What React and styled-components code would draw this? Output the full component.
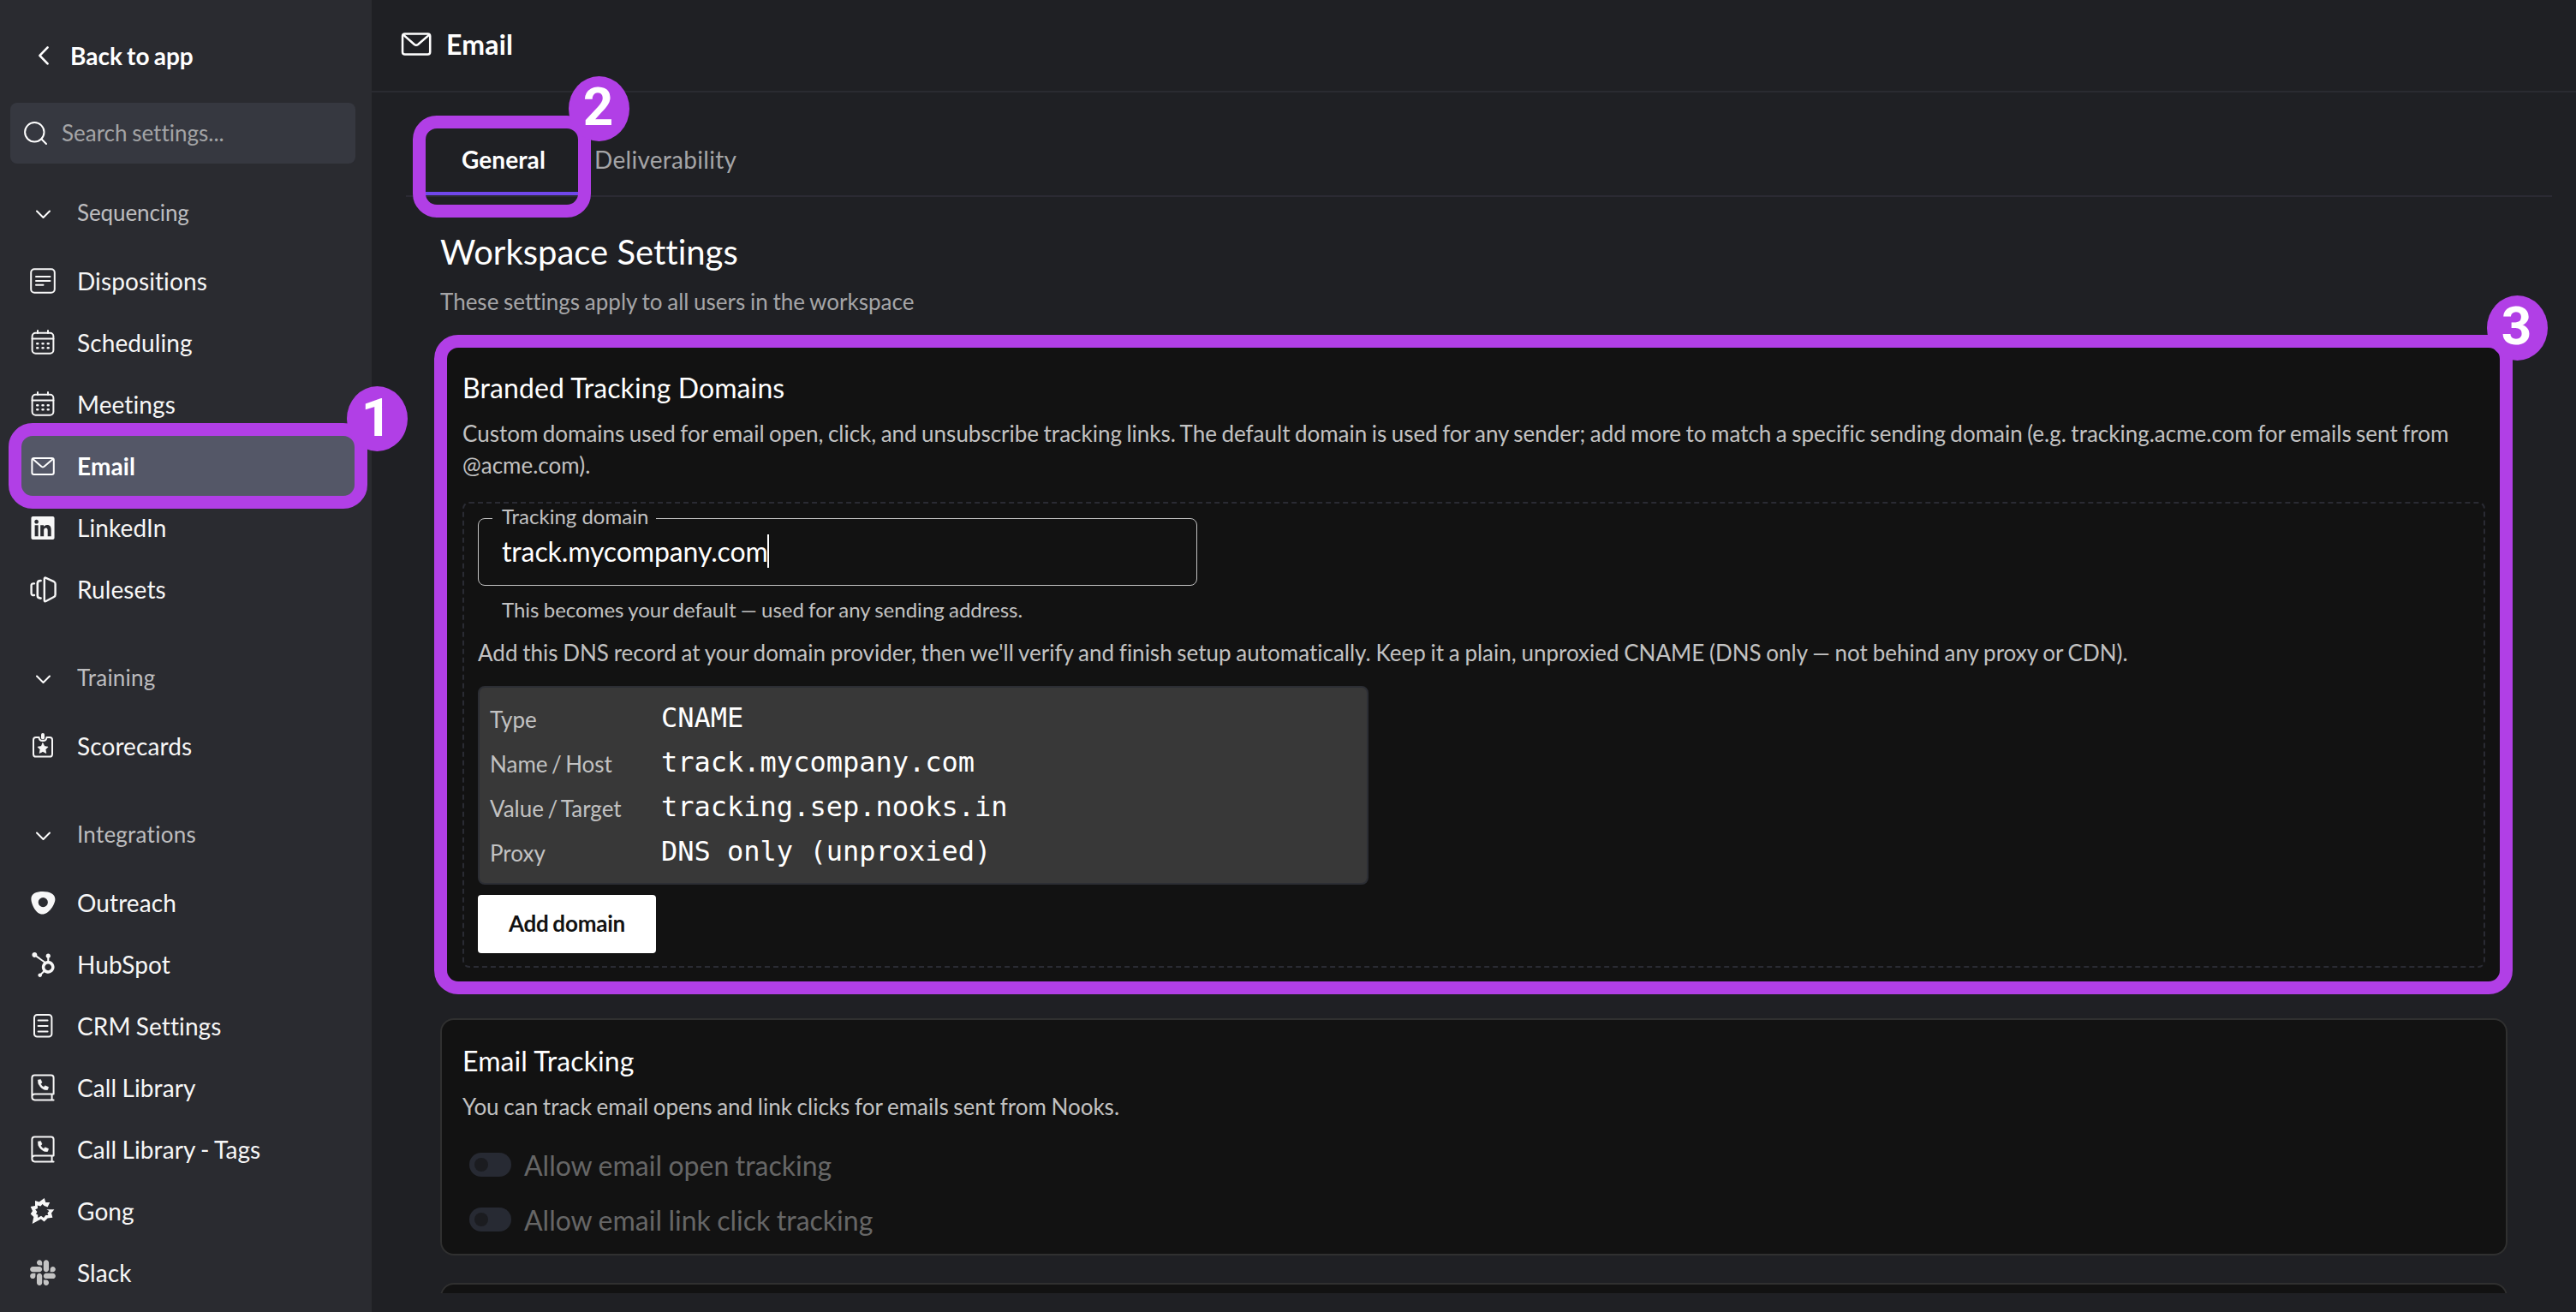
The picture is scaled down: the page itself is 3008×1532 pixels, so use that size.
import React from "react";
import styled, { createGlobalStyle, css } from "styled-components";
import { FaHubspot, FaLinkedin, FaSlack } from "react-icons/fa";

const GlobalStyle = createGlobalStyle`
    * {
        box-sizing: border-box;
    }

    body {
        margin: 0;
        background-color: #1f2024;
        color: #ffffff;
        font-family: Lato, "Liberation Sans", sans-serif;
        font-size: 28px;
        font-variant-ligatures: none;
        overflow: hidden;
    }
`;

/* Layout */

const Page = styled.div`
    display: flex;
    height: 1532px;
    overflow: hidden;
`;

const Sidebar = styled.nav`
    flex: none;
    width: 434px;
    display: flex;
    flex-direction: column;
    background-color: #2a2b30;
`;

const Main = styled.main`
    flex-grow: 1;
    min-width: 0;
    display: flex;
    flex-direction: column;
    padding-bottom: 22px;
`;

/* Callouts */

const CalloutFrame = styled.div`
    position: absolute;
    top: ${props => props.$top}px;
    right: ${props => props.$right}px;
    bottom: ${props => props.$bottom}px;
    left: ${props => props.$left}px;
    border: 15.5px solid #b13fe6;
    border-radius: 28px;
    z-index: 2;
    pointer-events: none;
`;

const CalloutBadge = styled.div`
    position: absolute;
    top: ${props => props.$top}px;
    right: ${props => props.$right}px;
    width: 71px;
    height: 76px;
    display: flex;
    align-items: center;
    justify-content: center;
    padding: 0 2px 3px 0;
    border-radius: 50%;
    background-color: #b13fe6;
    color: #ffffff;
    font-family: Roboto, "Liberation Sans", sans-serif;
    font-size: 62px;
    font-weight: 700;
    line-height: 1;
`;

const Callout = ({ number, top, right, bottom, left, badgeTop, badgeRight }) => (
    <CalloutFrame $top={top} $right={right} $bottom={bottom} $left={left}>
        <CalloutBadge $top={badgeTop} $right={badgeRight}>{number}</CalloutBadge>
    </CalloutFrame>
);

/* Icons */

const Svg = styled.svg`
    display: block;
    flex: none;
    fill: none;
    stroke: currentColor;
    stroke-width: 2;
    stroke-linecap: round;
    stroke-linejoin: round;
    overflow: visible;
`;

const ChevronLeftIcon = () => (
    <Svg width="12" height="22" viewBox="0 0 12 22">
        <path d="M10.6 1.4 1.4 10.8 10.6 20.4" strokeWidth="2.6" />
    </Svg>
);

const ChevronDownIcon = () => (
    <Svg width="30" height="30" viewBox="0 0 30 30">
        <path d="M8 13.5 15.5 21 23 13.5" />
    </Svg>
);

const SearchIcon = () => (
    <Svg width="28" height="28" viewBox="0 0 28 28">
        <circle cx="12.3" cy="12.3" r="11.2" />
        <path d="M20.3 20.3 26 26" />
    </Svg>
);

const MailIcon = ({ size = 30 }) => (
    <Svg width={size} height={size} viewBox="0 0 30 30">
        <rect x="2.4" y="5.9" width="25.4" height="19" rx="2.2" />
        <path d="M3.4 7 13.4 15.8Q15 17 16.6 15.8L26.8 7" />
    </Svg>
);

const DispositionsIcon = () => (
    <Svg width="30" height="30" viewBox="0 0 30 30">
        <rect x="1.2" y="1.2" width="27.6" height="27.6" rx="4" />
        <path d="M7 10H23.5M7 15H23.5M7 19.8H15.5" />
    </Svg>
);

const CalendarIcon = () => (
    <Svg width="30" height="30" viewBox="0 0 30 30">
        <rect x="2.6" y="3.8" width="24.8" height="24" rx="4" />
        <path d="M2.6 10.4H27.4M9 1V4M21 1V4" />
        <path d="M8.3 16.3H9.2M14.6 16.3H15.5M20.8 16.3H21.7M8.3 21.2H9.2M14.6 21.2H15.5M20.8 21.2H21.7" strokeWidth="2.6" />
    </Svg>
);

const RulesetsIcon = () => (
    <Svg width="30" height="30" viewBox="0 0 30 30">
        <path d="M16.8 3Q16.8 1 18.6 1.8L28 6.2Q29.6 7 29.6 8.8V21.6Q29.6 23.2 28 24L18.6 29Q16.8 29.8 16.8 28Z" strokeWidth="2.4" />
        <path d="M12.6 5Q8.8 5 8.8 8V22.6Q8.8 25.6 12.6 25.6" strokeWidth="2.6" />
        <path d="M5 8.4Q1.6 8 1.6 10.6V20Q1.6 22.4 5 22" strokeWidth="2.4" />
    </Svg>
);

const ScorecardIcon = () => (
    <Svg width="30" height="30" viewBox="0 0 30 30">
        <path d="M10.6 5H7Q4 5 4 8V24.4Q4 27.6 7 27.6H23Q26 27.6 26 24.4V8Q26 5 23 5H19.4Q19.4 9 15 9Q10.6 9 10.6 5Z" />
        <path d="M15 2V5.6" strokeWidth="4" />
        <path d="M15 11.8 16.9 15.6 21 16.2 18 19.2 18.8 23.4 15 21.4 11.2 23.4 12 19.2 9 16.2 13.1 15.6Z" fill="currentColor" strokeWidth="0.8" />
    </Svg>
);

const OutreachIcon = () => (
    <Svg width="30" height="30" viewBox="0 0 30 30">
        <path
            d="M15 2C8 2 1.4 4 1.4 10.5C1.4 17 7 28.6 14.5 28.6C22 28.6 29.4 17 29.4 11C29.4 5 23 2 15 2ZM15.3 9A5.6 5.6 0 1 1 15.3 20.2A5.6 5.6 0 1 1 15.3 9Z"
            fill="currentColor"
            fillRule="evenodd"
            stroke="none"
        />
    </Svg>
);

const CrmIcon = () => (
    <Svg width="30" height="30" viewBox="0 0 30 30">
        <rect x="5" y="2" width="20.4" height="25.6" rx="3.4" />
        <path d="M9.6 8.6H20.6M9.6 15H20.6M9.6 21.4H20.6" />
    </Svg>
);

const CallLibraryIcon = () => (
    <Svg width="30" height="30" viewBox="0 0 30 30">
        <path d="M27.6 22.4V3.4Q27.6 .4 24.6 .4H5.4Q2.4 .4 2.4 3.4V26Q2.4 29.4 5.6 29.4H27.6M27.6 22.4H5.6Q2.4 22.4 2.4 25.6M25.6 22.4V29.4" />
        <path
            d="M9.6 6.2 12.4 5.4 14 9 12.4 10.8Q13.6 13.4 16 14.4L17.8 12.8 21.6 14.4 20.6 17.4Q16.6 18.6 12.6 14.6Q8.6 10.6 9.6 6.2Z"
            fill="currentColor"
            strokeWidth="0.6"
        />
    </Svg>
);

const GongIcon = () => (
    <Svg width="30" height="30" viewBox="0 0 30 30">
        <path
            d="M2.7 30 4.3 22 .7 18.6 3 15 .7 10 6 8.9 6 2.9 10.7 4.5 16.8 0 18.3 5 23.2 5 20.6 10.4 16.6 9 14.6 7 12.4 9.4 8.8 8.6 9 12 6.2 13.2 8.4 16 7 18.4 9.2 19.6 9.2 23 13 20.8 16 23 18.4 20 21.4 20 20.4 17.4 22.4 15 19.4 13.2 28.4 13.2 25 17.6 26.4 22.8 20.6 23.4 16.6 27.4 12.8 24.4Z"
            fill="currentColor"
            stroke="none"
        />
    </Svg>
);

/* Sidebar */

const BackLink = styled.div`
    display: flex;
    align-items: center;
    flex: none;
    gap: 25px;
    height: 120px;
    padding: 10px 0 0 45px;
    font-weight: 700;
    word-spacing: -1.6px;
`;

const SearchBox = styled.div`
    display: flex;
    align-items: center;
    flex: none;
    gap: 16px;
    height: 71px;
    margin: 0 19px 13px 12px;
    padding-left: 16px;
    border-radius: 8px;
    background-color: #363840;

    span {
        padding-bottom: 2px;
        color: #a3a4a6;
        font-size: 26px;
        word-spacing: -1px;
    }
`;

const GroupTitle = styled.div`
    display: flex;
    align-items: center;
    flex: none;
    gap: 25px;
    height: 88px;
    margin-top: ${props => props.$first ? 0 : 23}px;
    padding-left: 35px;

    span {
        color: #bdbdbf;
        font-size: 26px;
        letter-spacing: ${props => props.$first ? -0.1 : 0.24}px;
    }
`;

const NavItem = styled.div`
    position: relative;
    display: flex;
    align-items: center;
    flex: none;
    gap: 25px;
    height: 72px;
    margin: 0 18px 0 12px;
    padding-left: 23px;
    border-radius: 8px;
    color: #f7f7f7;
    letter-spacing: 0.1px;
    word-spacing: -1px;
    ${props => props.$active && css`
        background-color: #545767;
        color: #ffffff;
        font-weight: 700;
    `}
`;

const IconSlot = styled.div`
    display: flex;
    align-items: center;
    justify-content: center;
    flex: none;
    width: 30px;
    height: 30px;
    color: ${props => props.$muted ? "#c4c4c4" : "inherit"};
`;

const groups = [
    {
        title: "Sequencing",
        items: [
            { label: "Dispositions", icon: <DispositionsIcon /> },
            { label: "Scheduling", icon: <CalendarIcon /> },
            { label: "Meetings", icon: <CalendarIcon /> },
            { label: "Email", icon: <MailIcon />, active: true },
            { label: "LinkedIn", icon: <FaLinkedin size={31} /> },
            { label: "Rulesets", icon: <RulesetsIcon /> },
        ],
    },
    {
        title: "Training",
        items: [{ label: "Scorecards", icon: <ScorecardIcon /> }],
    },
    {
        title: "Integrations",
        items: [
            { label: "Outreach", icon: <OutreachIcon /> },
            { label: "HubSpot", icon: <FaHubspot size={29} /> },
            { label: "CRM Settings", icon: <CrmIcon /> },
            { label: "Call Library", icon: <CallLibraryIcon /> },
            { label: "Call Library - Tags", icon: <CallLibraryIcon /> },
            { label: "Gong", icon: <GongIcon /> },
            { label: "Slack", icon: <FaSlack size={34} />, muted: true },
        ],
    },
];

const SettingsNav = () => (
    <Sidebar>
        <BackLink>
            <ChevronLeftIcon />
            Back to app
        </BackLink>
        <SearchBox>
            <SearchIcon />
            <span>Search settings...</span>
        </SearchBox>
        {groups.map((group, i) => (
            <React.Fragment key={group.title}>
                <GroupTitle $first={i === 0}>
                    <ChevronDownIcon />
                    <span>{group.title}</span>
                </GroupTitle>
                {group.items.map(item => (
                    <NavItem key={item.label} $active={item.active}>
                        <IconSlot $muted={item.muted}>{item.icon}</IconSlot>
                        {item.label}
                        {item.active && (
                            <Callout number={1} top={-14} right={-13} bottom={-14} left={-2} badgeTop={-58} badgeRight={-62} />
                        )}
                    </NavItem>
                ))}
            </React.Fragment>
        ))}
    </Sidebar>
);

/* Main column */

const Header = styled.header`
    display: flex;
    align-items: center;
    flex: none;
    gap: 16px;
    height: 108px;
    padding: 0 0 4px 33px;
    border-bottom: 2px solid #2a2b31;
    font-size: 32px;
    font-weight: 700;
    letter-spacing: 0.2px;
`;

/* Cuts the cards at the bottom but leaves room above for the tab badge */
const Content = styled.div`
    flex-grow: 1;
    min-height: 0;
    padding: 36px 28px 0 40px;
    clip-path: inset(-60px 0 0 0);
`;

const Tabs = styled.div`
    display: flex;
    height: 86px;
    border-bottom: 2px solid #2b2a33;
`;

const Tab = styled.div`
    position: relative;
    display: flex;
    align-items: center;
    height: 84px;
    padding: 0 24px;
    color: #a5a5a7;
    letter-spacing: 0.3px;
    ${props => props.$active && css`
        margin-left: 22px;
        margin-right: -8px;
        padding: 4px 41px 0 43px;
        border-bottom: 4px solid #7047eb;
        color: #ffffff;
        font-weight: 700;
        letter-spacing: 0.1px;
    `}
`;

const Panel = styled.section`
    padding: 0 52px 0 40px;
`;

const PageTitle = styled.h1`
    margin: 0;
    padding-top: 40px;
    font-size: 40px;
    font-weight: 400;
    line-height: 48px;
`;

const PageSubtitle = styled.p`
    margin: 17px 0 33px;
    color: #a5a5a7;
    font-size: 26px;
    line-height: 35px;
    word-spacing: -0.95px;
`;

const Card = styled.div`
    position: relative;
    height: ${props => props.$height}px;
    margin-bottom: 32px;
    padding: 26px 24px 0;
    border: 2px solid #303030;
    border-radius: 16px;
    background-color: #121212;
`;

const CardTitle = styled.h2`
    margin: 0;
    font-size: 32px;
    font-weight: 400;
    line-height: 44px;
    letter-spacing: 0.1px;
`;

const CardText = styled.p`
    margin: 13px 0 0;
    color: #c2c2c2;
    font-size: 26px;
    line-height: 37px;
    word-spacing: ${props => props.$tight ? -1.2 : -0.98}px;
`;

const DomainForm = styled.div`
    display: flex;
    flex-direction: column;
    align-items: flex-start;
    height: 544px;
    margin-top: 24px;
    padding: 0 16px;
    border: 2px dashed #2a2b33;
    border-radius: 8px;
`;

const Field = styled.fieldset`
    width: 840px;
    height: 94px;
    margin: 2px 0 0;
    padding: 0 0 0 17px;
    border: 1px solid #c2c2c2;
    border-radius: 8px;
    color: #c2c2c2;
    font-size: 24px;

    legend {
        margin-left: -1px;
        padding: 0 9px 5px 11px;
        line-height: 25px;
    }
`;

const FieldValue = styled.div`
    display: flex;
    align-items: center;
    height: 47px;
    padding-left: 10px;
    color: #ffffff;
    font-size: 32px;
    letter-spacing: -0.12px;
`;

const Caret = styled.span`
    width: 2px;
    height: 39px;
    margin-left: -1px;
    background-color: #ffffff;
`;

const FieldHint = styled.div`
    margin: 10px 0 0 28px;
    color: #c2c2c2;
    font-size: 24px;
    line-height: 36px;
    word-spacing: -0.92px;
`;

const DnsHint = styled.div`
    margin-top: 14px;
    color: #c2c2c2;
    font-size: 26px;
    line-height: 36px;
    word-spacing: -0.93px;
`;

const DnsTable = styled.dl`
    display: grid;
    grid-template-columns: 200px 1fr;
    grid-auto-rows: 52px;
    align-content: center;
    align-items: center;
    width: 1040px;
    height: 232px;
    margin: 21px 0 12px;
    padding-left: 12px;
    border: 2px solid #2c2e34;
    border-radius: 8px;
    background-color: #383838;

    dt {
        padding-top: 2px;
        color: #c2c2c2;
        font-size: 26px;
        word-spacing: -2.2px;
    }

    dd {
        margin: 0;
        padding-bottom: 2px;
        font-family: "DejaVu Sans Mono", monospace;
        font-size: 32px;
    }
`;

const PrimaryButton = styled.button`
    width: 208px;
    height: 68px;
    padding: 0 0 2px;
    border: none;
    border-radius: 4px;
    background-color: #ffffff;
    color: #121212;
    font-family: inherit;
    font-size: 26px;
    font-weight: 700;
    letter-spacing: -0.2px;
    word-spacing: -1.4px;
`;

const SwitchList = styled.div`
    margin-top: 17px;
`;

const SwitchRow = styled.div`
    display: flex;
    align-items: center;
    gap: 15px;
    height: 64px;
    padding-left: 8px;
    color: #666666;
    font-size: 32px;
    word-spacing: -0.7px;
`;

const Switch = styled.span`
    display: flex;
    align-items: center;
    width: 49px;
    height: 28px;
    padding-left: 6px;
    border-radius: 14px;
    background-color: #272a33;

    &::before {
        content: "";
        width: 16px;
        height: 16px;
        border-radius: 50%;
        background-color: #1b1c20;
    }
`;

const records = [
    ["Type", "CNAME"],
    ["Name / Host", "track.mycompany.com"],
    ["Value / Target", "tracking.sep.nooks.in"],
    ["Proxy", "DNS only (unproxied)"],
];

const switches = ["Allow email open tracking", "Allow email link click tracking"];

const TrackingDomainsCard = () => (
    <Card $height={754}>
        <CardTitle>Branded Tracking Domains</CardTitle>
        <CardText $tight>
            Custom domains used for email open, click, and unsubscribe tracking links. The default domain is used for any
            sender; add more to match a specific sending domain (e.g. tracking.acme.com for emails sent from @acme.com).
        </CardText>
        <DomainForm>
            <Field>
                <legend>Tracking domain</legend>
                <FieldValue>
                    track.mycompany.com
                    <Caret />
                </FieldValue>
            </Field>
            <FieldHint>This becomes your default — used for any sending address.</FieldHint>
            <DnsHint>
                Add this DNS record at your domain provider, then we'll verify and finish setup automatically. Keep it a
                plain, unproxied CNAME (DNS only — not behind any proxy or CDN).
            </DnsHint>
            <DnsTable>
                {records.map(([name, value]) => (
                    <React.Fragment key={name}>
                        <dt>{name}</dt>
                        <dd>{value}</dd>
                    </React.Fragment>
                ))}
            </DnsTable>
            <PrimaryButton>Add domain</PrimaryButton>
        </DomainForm>
        <Callout number={3} top={-14} right={-8} bottom={-6} left={-9} badgeTop={-61.5} badgeRight={-56} />
    </Card>
);

const EmailTrackingCard = () => (
    <Card $height={277}>
        <CardTitle>Email Tracking</CardTitle>
        <CardText>You can track email opens and link clicks for emails sent from Nooks.</CardText>
        <SwitchList>
            {switches.map(label => (
                <SwitchRow key={label}>
                    <Switch />
                    {label}
                </SwitchRow>
            ))}
        </SwitchList>
    </Card>
);

const App = () => (
    <React.Fragment>
        <GlobalStyle />
        <Page>
            <SettingsNav />
            <Main>
                <Header>
                    <MailIcon size={38} />
                    Email
                </Header>
                <Content>
                    <Tabs>
                        <Tab $active>
                            General
                            <Callout number={2} top={-9} right={-12} bottom={-30} left={-14} badgeTop={-61.5} badgeRight={-60} />
                        </Tab>
                        <Tab>Deliverability</Tab>
                    </Tabs>
                    <Panel>
                        <PageTitle>Workspace Settings</PageTitle>
                        <PageSubtitle>These settings apply to all users in the workspace</PageSubtitle>
                        <TrackingDomainsCard />
                        <EmailTrackingCard />
                        <Card $height={277} />
                    </Panel>
                </Content>
            </Main>
        </Page>
    </React.Fragment>
);

export default App;
